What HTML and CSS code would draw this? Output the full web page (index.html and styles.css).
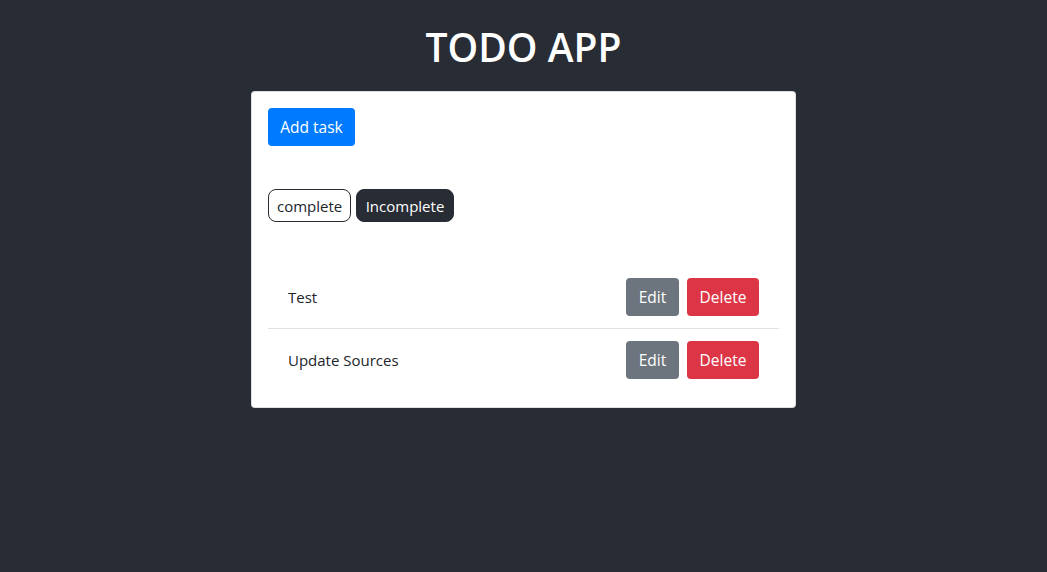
FILE: index.html
```html
<!DOCTYPE html>
<html>
<head>
<meta charset="utf-8">
<link rel="stylesheet" href="styles.css">
</head>
<body>
<div class="app">
  <h1 class="title">TODO APP</h1>
  <div class="card">
    <button class="btn btn-primary">Add task</button>
    <div class="filters">
      <button class="pill pill-outline">complete</button>
      <button class="pill pill-dark">Incomplete</button>
    </div>
    <ul class="list">
      <li class="item">
        <span class="item-text">Test</span>
        <div class="actions">
          <button class="btn btn-secondary">Edit</button>
          <button class="btn btn-danger">Delete</button>
        </div>
      </li>
      <li class="item">
        <span class="item-text">Update Sources</span>
        <div class="actions">
          <button class="btn btn-secondary">Edit</button>
          <button class="btn btn-danger">Delete</button>
        </div>
      </li>
    </ul>
  </div>
</div>
</body>
</html>
```

FILE: styles.css
```css
* { box-sizing: border-box; }
html, body {
  margin: 0;
  padding: 0;
  background: #282c34;
  font-family: "Open Sans", "Noto Sans", sans-serif;
  color: #212529;
}
.app {
  display: flex;
  flex-direction: column;
  align-items: center;
  padding-top: 19px;
}
.title {
  margin: 0 0 17px 0;
  font-size: 39px;
  line-height: 55px;
  font-weight: 600;
  color: #ffffff;
  letter-spacing: 0;
}
.card {
  width: 545px;
  background: #ffffff;
  border: 1px solid rgba(0, 0, 0, 0.125);
  border-radius: 4px;
  padding: 16px;
  display: flex;
  flex-direction: column;
  align-items: flex-start;
}
.btn {
  border: none;
  border-radius: 4px;
  height: 38px;
  padding: 0 12px;
  font-family: inherit;
  font-size: 15.5px;
  color: #ffffff;
  cursor: pointer;
}
.btn-primary { background: #007bff; width: 87px; }
.btn-secondary { background: #6c757d; width: 53px; }
.btn-danger { background: #dc3545; width: 72px; }
.filters {
  display: flex;
  gap: 5px;
  margin-top: 43px;
}
.pill {
  height: 33px;
  border-radius: 8px;
  font-family: inherit;
  font-size: 15px;
  padding: 0 8px;
}
.pill-outline {
  background: #ffffff;
  border: 1px solid #282c34;
  color: #212529;
  width: 83px;
  font-weight: 400;
}
.pill-dark {
  background: #282c34;
  border: 1px solid #282c34;
  color: #ffffff;
  width: 98px;
}
.list {
  list-style: none;
  margin: 48px 0 0 0;
  padding: 0;
  width: 100%;
}
.item {
  display: flex;
  align-items: center;
  justify-content: space-between;
  padding: 8px 20px 12px 20px;
}
.item + .item {
  border-top: 1px solid #dee2e6;
  padding-top: 12px;
}
.item-text {
  font-size: 15px;
  color: #212529;
}
.actions {
  display: flex;
  gap: 8px;
}
```
